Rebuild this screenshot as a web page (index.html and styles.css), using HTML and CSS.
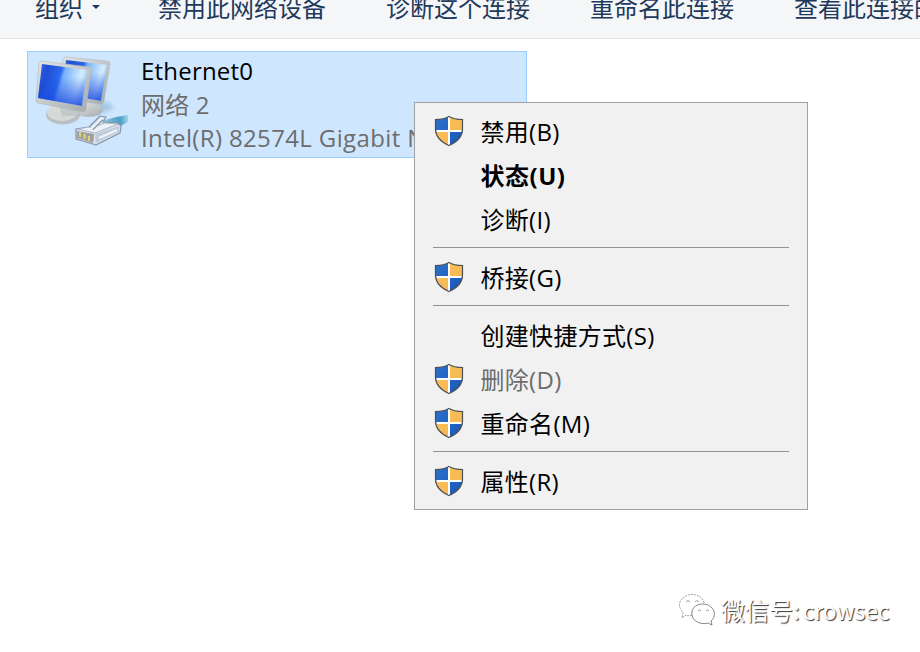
FILE: index.html
```html
<!DOCTYPE html>
<html lang="zh-CN">
<head>
<meta charset="utf-8">
<title>网络连接</title>
<link rel="stylesheet" href="styles.css">
</head>
<body>
<svg class="defs" width="0" height="0">
  <defs>
    <linearGradient id="blue" x1="0" y1="0" x2="1" y2="1"><stop offset="0" stop-color="#2d73c9"/><stop offset="1" stop-color="#1954b7"/></linearGradient>
    <linearGradient id="gold" x1="0" y1="0" x2="1" y2="1"><stop offset="0" stop-color="#ffc35b"/><stop offset="1" stop-color="#f1b451"/></linearGradient>
    <clipPath id="shieldClip"><path d="M15 1.500C11 4 6 4.500 1.500 4.500V14C1.500 22 7 27 15 30.500C23 27 28.500 22 28.500 14V4.500C24 4.500 19 4 15 1.500Z"/></clipPath>
    <symbol id="shield" viewBox="0 0 30 32">
      <g clip-path="url(#shieldClip)">
        <path fill="#fff" d="M0 0h30v32H0z"/>
        <path fill="url(#blue)" d="M0 0h14v15H0zM16 17h14v15H16z"/>
        <path fill="url(#gold)" d="M16 0h14v15H16zM0 17h14v15H0z"/>
      </g>
      <path fill="none" stroke="#4b5055" stroke-width="1.200" d="M15 1.500C11 4 6 4.500 1.500 4.500V14C1.500 22 7 27 15 30.500C23 27 28.500 22 28.500 14V4.500C24 4.500 19 4 15 1.500Z"/>
    </symbol>
  </defs>
</svg>
<header class="toolbar">
  <span class="tool organize">组织<i class="caret"></i></span>
  <span class="tool">禁用此网络设备</span>
  <span class="tool">诊断这个连接</span>
  <span class="tool">重命名此连接</span>
  <span class="tool">查看此连接的状态</span>
</header>
<main class="content">
  <section class="connection">
    <svg class="network" viewBox="0 0 106 106" width="106" height="106">
      <defs>
        <linearGradient id="screen" x1="0" y1="0" x2="1" y2=".25"><stop offset="0" stop-color="#3c6ce0"/><stop offset=".2" stop-color="#1f4fd4"/><stop offset=".48" stop-color="#2968ef"/><stop offset=".56" stop-color="#78b3fb"/><stop offset=".9" stop-color="#d5edff"/><stop offset="1" stop-color="#a9d5ff"/></linearGradient>
        <linearGradient id="shade" x1="0" y1="0" x2="0" y2="1"><stop offset=".3" stop-color="#1748dd" stop-opacity="0"/><stop offset="1" stop-color="#1748dd" stop-opacity=".85"/></linearGradient>
        <linearGradient id="metal" x1="0" y1="0" x2="1" y2="1"><stop offset="0" stop-color="#e4e5e2"/><stop offset=".5" stop-color="#c5c9ca"/><stop offset="1" stop-color="#a3a9ad"/></linearGradient>
        <linearGradient id="cable" x1="0" y1="0" x2="1" y2="0"><stop offset="0" stop-color="#8bc8df"/><stop offset=".7" stop-color="#4a9fc4"/><stop offset="1" stop-color="#a2d5ed"/></linearGradient>
        <filter id="soft" x="-30%" y="-30%" width="160%" height="160%"><feGaussianBlur stdDeviation="2"/></filter>
      </defs>
      <ellipse cx="63" cy="57" rx="20" ry="6" fill="#8db6d4" opacity=".65" filter="url(#soft)"/>
      <ellipse cx="58" cy="60" rx="15" ry="7" fill="url(#metal)"/>
      <path fill="url(#metal)" stroke="#b5b8b8" stroke-width=".6" d="M33 9Q34 7 36 7L77 11Q80 11 80 14L74 51Q73 55 69 54L28 47Z"/>
      <path fill="url(#screen)" d="M36 10L77 15L71 51L32 44Z"/>
      <path fill="url(#shade)" d="M36 10L77 15L71 51L32 44Z"/>
      <ellipse cx="33" cy="64.500" rx="17" ry="10" fill="#b9bfc2"/>
      <ellipse cx="32" cy="62.500" rx="15" ry="8.500" fill="#d7d9d9"/>
      <path fill="#c3c8c9" d="M28 52L52 57L46 66L32 66Z"/>
      <path fill="url(#metal)" stroke="#b5b8b8" stroke-width=".6" d="M9 13Q9 11 12 11L59 17Q62 17 61 20L56 59Q56 62 52 62L8 53Q5 52 6 49Z"/>
      <path fill="url(#screen)" d="M12 14L57 20L52 56L8 48Z"/>
      <path fill="url(#shade)" d="M12 14L57 20L52 56L8 48Z"/>
      <path fill="url(#cable)" d="M72 71L86 67L98 65L98 72L89 77L85 74L76 76Z"/>
      <path fill="#d8e1eb" stroke="#8392a8" stroke-width="1.200" stroke-linejoin="round" d="M46 79L59 77L70 66L76 67L73 72L88 73L91 76L90 83L66 95L46 89Z"/>
      <path fill="#eef2f8" stroke="#a0acbe" stroke-width=".8" d="M48 79L65 83L88 74L75 73L62 78L59 77Z"/>
      <path fill="#c0cbdb" d="M65 84L89 76L89 82L66 93Z"/>
      <path fill="none" stroke="#8f9bb0" stroke-width="3.500" d="M62 79L72 69"/>
      <path fill="none" stroke="#f0f5fc" stroke-width="2" d="M61 79L72 68M69 88L87 80"/>
      <path fill="#a09e98" d="M47 81L64 84L63 93L47 88Z"/>
      <path fill="none" stroke="#d9d27c" stroke-width="2.200" d="M50 82V87M54.500 84V89M59 86V91"/>
    </svg>
    <div class="info">
      <div class="name">Ethernet0</div>
      <div class="network-name">网络 2</div>
      <div class="adapter">Intel(R) 82574L Gigabit Network</div>
    </div>
  </section>
</main>
<nav class="menu">
  <div class="item"><svg><use href="#shield"/></svg><span>禁用(B)</span></div>
  <div class="item bold"><span>状态(U)</span></div>
  <div class="item"><span>诊断(I)</span></div>
  <hr>
  <div class="item"><svg><use href="#shield"/></svg><span>桥接(G)</span></div>
  <hr>
  <div class="item"><span>创建快捷方式(S)</span></div>
  <div class="item disabled"><svg><use href="#shield"/></svg><span>删除(D)</span></div>
  <div class="item"><svg><use href="#shield"/></svg><span>重命名(M)</span></div>
  <hr>
  <div class="item"><svg><use href="#shield"/></svg><span>属性(R)</span></div>
</nav>
<footer class="watermark">
  <svg viewBox="0 0 38 34" width="38" height="34" fill="none" stroke="#888" stroke-width=".8">
    <path stroke-dasharray="2 1" d="M14 22C11 23 9 23 8 22L4 25L5 19C-1 14 1 6 8 3C15-1 25 3 26 10"/>
    <path stroke="#666" d="M25 11C17 11 13 16 14 22C15 29 24 32 30 30L34 32L33 28C38 24 37 17 33 14C31 12 28 11 25 11Z"/>
    <path d="M8 9Q10 6 12 9M17 9Q19 6 21 9M20 18Q21.500 16 23 18M28 18Q29.500 16 31 18"/>
  </svg>
  <span class="wechat">微信号:</span><span class="account">crowsec</span>
</footer>
</body>
</html>
```
FILE: styles.css
```css
* { box-sizing: border-box; }
body {
  margin: 0;
  width: 920px;
  height: 652px;
  overflow: hidden;
  background: #fff;
  color: #000;
  font: 24px/32px "Open Sans", "Noto Sans CJK SC", sans-serif;
}
.defs { position: absolute; }
.toolbar {
  display: flex;
  gap: 60px;
  height: 39px;
  padding-left: 35px;
  overflow: hidden;
  background: #f5f6f8;
  border-bottom: 1px solid #e5e5e5;
  color: #1e395b;
  white-space: nowrap;
  font-family: "Noto Sans CJK SC", sans-serif;
}
.tool { flex: none; margin-top: -9px; }
.organize { display: flex; width: 63px; }
.caret {
  flex: none;
  width: 8px;
  height: 4px;
  margin: 14px 0 0 9px;
  background: #1e395b;
  clip-path: polygon(0 0, 100% 0, 50% 100%);
}
.content { padding: 12px 0 0 27px; }
.connection {
  display: flex;
  width: 500px;
  height: 107px;
  overflow: hidden;
  background: #cfe6ff;
  border: 1px solid #99ccff;
}
.network { flex: none; margin: -2px 0 0 2px; }
.info { padding: 2px 0 0 5px; line-height: 33.500px; white-space: nowrap; color: #6d6d6d; }
.name { color: #000; letter-spacing: .2px; }
.network-name { letter-spacing: .2px; }
.adapter { letter-spacing: .36px; }
.menu {
  position: absolute;
  top: 102px;
  left: 414px;
  width: 394px;
  height: 408px;
  padding: 6px 18px;
  background: #f1f1f1;
  border: 1px solid #a0a0a0;
}
.item {
  display: grid;
  grid-template-columns: 30px 1fr;
  column-gap: 17px;
  align-items: center;
  height: 44px;
  padding-left: 1px;
  white-space: nowrap;
}
.item svg { width: 30px; height: 32px; }
.item span { grid-column: 2; margin: 1px 0 0 -.5px; letter-spacing: .3px; }
.item.bold span { letter-spacing: .5px; }
.bold { font-weight: 700; }
.disabled { color: #6d6d6d; }
.menu hr { height: 1px; margin: 6px 0 7px; border: 0; background: #919191; }
.watermark {
  position: absolute;
  left: 678px;
  top: 593px;
  display: flex;
  align-items: center;
  color: #fff;
  white-space: nowrap;
  font-family: "Noto Sans CJK SC", sans-serif;
  text-shadow: 1px 1px 1px #333;
}
.wechat { margin-left: 5px; }
.account { margin-left: 3px; font-size: 23px; letter-spacing: -.2px; }
```
